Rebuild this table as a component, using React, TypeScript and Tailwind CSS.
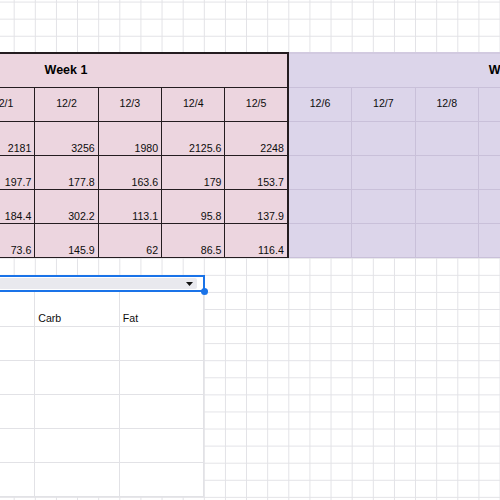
import React from "react";

const FONT = { fontFamily: '"Liberation Sans", Arial, sans-serif' };

const week1Dates = ["", "", "12/1", "12/2", "12/3", "12/4", "12/5"];
const week2Dates = ["12/6", "12/7", "12/8", "", "", "", ""];

const week1Values: string[][] = [
  ["", "", "2181", "3256", "1980", "2125.6", "2248"],
  ["", "", "197.7", "177.8", "163.6", "179", "153.7"],
  ["", "", "184.4", "302.2", "113.1", "95.8", "137.9"],
  ["", "", "73.6", "145.9", "62", "86.5", "116.4"],
];

function WeekBlock({
  title,
  dates,
  values,
  variant,
}: {
  title: string;
  dates: string[];
  values: string[][];
  variant: "pink" | "purple";
}) {
  const pink = variant === "pink";
  const bg = pink ? "bg-[#ecd5df]" : "bg-[#dcd5ea]";
  const line = pink ? "border-[#241c20]" : "border-[#c9c0d9]";
  return (
    <div
      className={`grid grid-cols-[repeat(7,63.38px)] grid-rows-[33.4px_repeat(5,34.16px)] shrink-0 border-t-2 ${bg} ${
        pink ? "border-[#241c20]" : "border-[#d2cae0]"
      }`}
    >
      <div
        className={`col-span-7 flex items-center justify-center border-b text-[12.5px] font-bold text-black ${line} ${
          pink ? "border-r-2" : "border-r"
        }`}
      >
        {title}
      </div>
      {dates.map((d, i) => (
        <div
          key={`d${i}`}
          className={`flex items-center justify-center border-b text-[10.6px] text-[#0d0d0d] ${line} ${
            pink && i === 6 ? "border-r-2" : "border-r"
          }`}
        >
          {d}
        </div>
      ))}
      {values.map((row, r) =>
        row.map((v, i) => (
          <div
            key={`${r}-${i}`}
            className={`flex items-end justify-end border-b pb-[1px] pr-[3px] text-[10.6px] leading-[12px] text-[#0d0d0d] ${line} ${
              pink && i === 6 ? "border-r-2" : "border-r"
            }`}
          >
            {v}
          </div>
        ))
      )}
    </div>
  );
}

export default function App() {
  const emptyRows = [
    ["", "", "", "", "", "", ""],
    ["", "", "", "", "", "", ""],
    ["", "", "", "", "", "", ""],
    ["", "", "", "", "", "", ""],
  ];
  const lower = [
    ["", "Carb", "Fat"],
    ["", "", ""],
    ["", "", ""],
    ["", "", ""],
    ["", "", ""],
    ["", "", ""],
  ];
  return (
    <div
      style={FONT}
      className="w-[500px] h-[500px] overflow-hidden bg-white bg-[linear-gradient(to_right,#e2e2e6_1px,transparent_1px),linear-gradient(to_bottom,#e2e2e6_1px,transparent_1px)] bg-[length:21.13px_17.08px] bg-[position:13.7px_1.6px] flex flex-col"
    >
      <div className="h-[52.3px] shrink-0" />
      <div className="flex ml-[-154.8px] shrink-0">
        <WeekBlock title="Week 1" dates={week1Dates} values={week1Values} variant="pink" />
        <WeekBlock title="Week 2" dates={week2Dates} values={emptyRows} variant="purple" />
      </div>
      <div className="h-[16.5px] shrink-0" />
      <div className="relative ml-[-4px] w-[209px] h-[17.5px] shrink-0 border-2 border-[#1a73e8] bg-white p-[1px] pr-[6px] flex">
        <div className="flex-1 rounded-[2px] bg-[#e9e9ee] flex items-center justify-end pr-[4px]">
          <svg width="7" height="4" viewBox="0 0 7 4">
            <polygon points="0,0 7,0 3.5,4" fill="#111" />
          </svg>
        </div>
        <div className="absolute right-[-4.5px] bottom-[-4.5px] w-[7px] h-[7px] rounded-full bg-[#1a73e8]" />
      </div>
      <div className="grid grid-cols-[35.3px_84.5px_84.5px] auto-rows-[34.16px] w-[204.3px] bg-white shrink-0">
        {lower.map((row, r) =>
          row.map((v, i) => (
            <div
              key={`${r}-${i}`}
              className="flex items-end border-r border-b border-[#e2e2e6] pl-[3px] pb-[2px] text-[10.6px] leading-[12px] text-[#0d0d0d]"
            >
              {v}
            </div>
          ))
        )}
      </div>
    </div>
  );
}
